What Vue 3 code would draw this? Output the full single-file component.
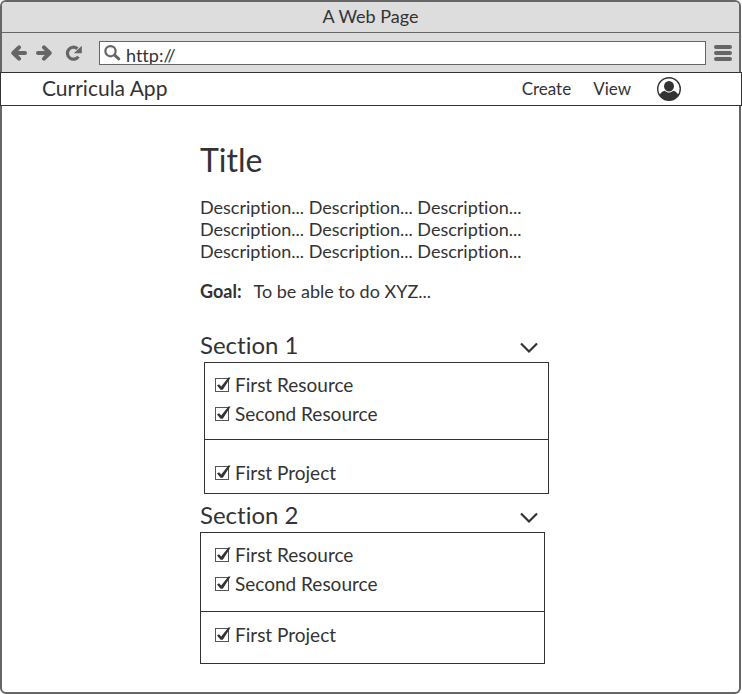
<script setup>
import { ref } from 'vue'

const address = ref('http://')
const descriptionLines = 3

const sections = ref([
  {
    title: 'Section 1',
    variant: 'first',
    open: true,
    resources: [
      { label: 'First Resource', done: true },
      { label: 'Second Resource', done: true },
    ],
    projects: [{ label: 'First Project', done: true }],
  },
  {
    title: 'Section 2',
    variant: 'second',
    open: true,
    resources: [
      { label: 'First Resource', done: true },
      { label: 'Second Resource', done: true },
    ],
    projects: [{ label: 'First Project', done: true }],
  },
])

const groupsOf = (section) => [section.resources, section.projects]
</script>

<template>
  <div class="window">
    <header class="chrome">
      <div class="title-bar">A Web Page</div>
      <div class="toolbar">
        <button class="tool" type="button" aria-label="Back">
          <svg width="16" height="16" viewBox="0 0 16 16">
            <path d="M8 2.300L2.300 8 8 13.700M3 8h11" class="arrow" />
          </svg>
        </button>
        <button class="tool forward" type="button" aria-label="Forward">
          <svg width="16" height="16" viewBox="0 0 16 16">
            <path d="M8 2.300L13.700 8 8 13.700M13 8H2" class="arrow" />
          </svg>
        </button>
        <button class="tool reload" type="button" aria-label="Reload">
          <svg width="17" height="16" viewBox="0 0 17 16">
            <path d="M13.400 11.600A6 6 0 1 1 12.400 3.700" fill="none" stroke="#666" stroke-width="3.200" />
            <path d="M16.800 .8v7.400H8.900z" fill="#666" />
          </svg>
        </button>
        <div class="address">
          <svg width="17" height="16" viewBox="0 0 17 16" aria-hidden="true">
            <circle cx="6.500" cy="6.200" r="5.100" fill="none" stroke="#666" stroke-width="2.200" />
            <path d="M10.600 10.200l4.200 3.600" stroke="#666" stroke-width="3" stroke-linecap="round" />
          </svg>
          <input v-model="address" type="text" aria-label="Address" />
        </div>
        <button class="tool menu" type="button" aria-label="Menu">
          <svg width="18" height="16" viewBox="0 0 18 16">
            <path d="M2 2h14M2 8h14M2 14h14" stroke="#666" stroke-width="4" stroke-linecap="round" />
          </svg>
        </button>
      </div>
    </header>

    <nav class="app-bar">
      <a class="brand" href="#">Curricula App</a>
      <div class="links">
        <a href="#create">Create</a>
        <a href="#view">View</a>
      </div>
      <button class="account" type="button" aria-label="Account">
        <svg width="24" height="24" viewBox="0 0 24 24">
          <circle cx="12" cy="12" r="11.300" fill="#fff" stroke="#333" stroke-width="1.400" />
          <path d="M2.600 18.200C3.600 15.600 5.400 14.300 7.800 13.800c2.400 2.400 6 2.400 8.400 0 2.400.5 4.200 1.800 5.200 4.400A11.300 11.300 0 0 1 2.600 18.200z" fill="#333" />
          <ellipse cx="12" cy="9.300" rx="5" ry="5.200" fill="#333" />
        </svg>
      </button>
    </nav>

    <main class="content">
      <h1>Title</h1>
      <p class="description">
        <span v-for="n in descriptionLines" :key="n">Description... Description... Description...</span>
      </p>
      <p class="goal"><strong>Goal:</strong><span>To be able to do XYZ...</span></p>

      <section v-for="section in sections" :key="section.title" :class="section.variant">
        <div class="section-head">
          <h2>{{ section.title }}</h2>
          <button
            class="toggle"
            type="button"
            :aria-expanded="section.open"
            :aria-label="'Toggle ' + section.title"
            @click="section.open = !section.open"
          >
            <svg width="18" height="12" viewBox="0 0 18 12">
              <path d="M1 1.500L9 9.500l8-8" fill="none" stroke="#333" stroke-width="2.200" />
            </svg>
          </button>
        </div>
        <div v-if="section.open" class="panel">
          <div v-for="(group, g) in groupsOf(section)" :key="g" class="group">
            <label v-for="item in group" :key="item.label" class="item">
              <span class="check">
                <input v-model="item.done" type="checkbox" />
                <svg v-if="item.done" width="16" height="16" viewBox="0 0 16 16" aria-hidden="true">
                  <path d="M2 9.400l2-1.200 2.200 2.400L13.400 1.400l2.200.2L7.800 13.800H5.600z" fill="#333" />
                </svg>
              </span>
              <span>{{ item.label }}</span>
            </label>
          </div>
        </div>
      </section>
    </main>
  </div>
</template>

<style>
body {
  background: #fff;
}
</style>

<style scoped>
.window {
  box-sizing: border-box;
  min-height: 100vh;
  margin-right: 1px;
  border: 2px solid #666;
  border-radius: 6px;
  color: #333;
  font-family: Lato, "Liberation Sans", sans-serif;
  font-size: 18px;
  font-variant-ligatures: none;
  line-height: 22px;
}

button {
  display: flex;
  padding: 0;
  border: 0;
  background: none;
  cursor: pointer;
}

a {
  color: inherit;
  text-decoration: none;
}

.chrome {
  border-radius: 4px 4px 0 0;
  background: #ddd;
}

.title-bar {
  padding: 3px 0 5px;
  border-bottom: 1px solid #666;
  text-align: center;
}

.toolbar {
  display: flex;
  align-items: center;
  padding: 8px 7px 7px 9px;
}

.arrow {
  fill: none;
  stroke: #666;
  stroke-width: 4;
  stroke-linecap: round;
  stroke-linejoin: round;
}

.forward {
  margin-left: 9px;
}

.reload {
  margin-left: 13px;
}

.address {
  display: flex;
  flex: 1;
  gap: 5px;
  height: 22px;
  margin: 0 8px 0 17px;
  padding: 0 4px;
  border: 1px solid #666;
  background: #fff;
}

.address svg {
  flex: none;
  margin-top: 3px;
}

.address input {
  flex: 1;
  min-width: 0;
  padding: 3px 0 0;
  border: 0;
  outline: 0;
  background: none;
  color: inherit;
  font: inherit;
}

.app-bar {
  display: flex;
  align-items: center;
  height: 32px;
  margin: 0 -3px 0 -2px;
  padding: 0 60px 0 41px;
  border: 1px solid #333;
  background: #fff;
}

.brand {
  margin-right: auto;
  padding-bottom: 2px;
  font-size: 21px;
}

.links {
  display: flex;
  gap: 22px;
  margin-right: 26px;
  font-size: 17px;
}

.content {
  padding: 36px 190px 28px 198px;
}

h1,
h2,
p {
  margin: 0;
  font-weight: 400;
}

h1 {
  font-size: 32px;
  line-height: 36px;
}

.description {
  margin-top: 18px;
}

.description span {
  display: block;
  white-space: nowrap;
}

.goal {
  display: flex;
  gap: 12px;
  margin: 18px 0 30px;
}

.section-head {
  display: flex;
  align-items: flex-start;
  justify-content: space-between;
  height: 30px;
  padding-right: 11px;
}

h2 {
  font-size: 24px;
  line-height: 26px;
}

.toggle {
  margin-top: 10px;
}

.panel {
  border: 1px solid #333;
}

.first {
  margin-bottom: 8px;
}

.first .panel {
  margin-left: 4px;
}

.second .panel {
  margin-right: 4px;
}

.group {
  display: flex;
  flex-direction: column;
  gap: 7px;
  padding: 11px 10px 14px;
}

.group + .group {
  border-top: 1px solid #333;
}

.first .group + .group {
  padding: 22px 10px 9px;
}

.second .group {
  padding: 11px 14px 16px;
}

.second .group + .group {
  padding: 12px 14px 17px;
}

.item {
  display: flex;
  align-items: center;
  gap: 4px;
  font-size: 19px;
}

.check {
  display: grid;
  align-items: end;
  padding-bottom: 2px;
}

.check input,
.check svg {
  grid-area: 1 / 1;
}

.check input {
  width: 14px;
  height: 14px;
  margin: 0;
  border: 1px solid #555;
  background: #fff;
  appearance: none;
}

.check svg {
  pointer-events: none;
}
</style>
